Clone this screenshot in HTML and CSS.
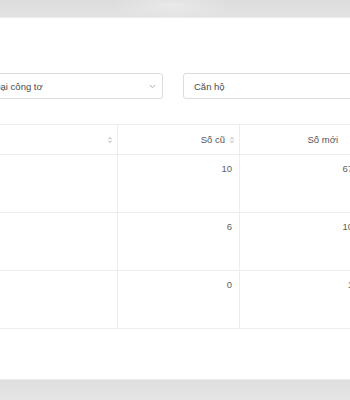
FILE: index.html
```html
<!DOCTYPE html>
<html lang="vi">
<head>
<meta charset="utf-8">
<link rel="stylesheet" href="styles.css">
</head>
<body>
<div class="band band-top"></div>
<div class="modal">
  <div class="filters">
    <div class="select">
      <span class="select-text">Loại công tơ</span>
      <svg class="chev" width="7" height="5" viewBox="0 0 7 5"><path d="M0.8 1 L3.5 3.7 L6.2 1" fill="none" stroke="#a6a6a6" stroke-width="0.9"/></svg>
    </div>
    <div class="select">
      <span class="select-text">Căn hộ</span>
    </div>
  </div>
  <div class="table">
    <div class="row head">
      <div class="cell c1"><span></span><svg class="sort" width="6" height="8" viewBox="0 0 6 8"><path d="M3 0.5 L5.5 3.3 L0.5 3.3 Z M3 7.5 L5.5 4.7 L0.5 4.7 Z" fill="#d4d4d8"/></svg></div>
      <div class="cell c2"><span>Số cũ</span><svg class="sort" width="6" height="8" viewBox="0 0 6 8"><path d="M3 0.5 L5.5 3.3 L0.5 3.3 Z M3 7.5 L5.5 4.7 L0.5 4.7 Z" fill="#d4d4d8"/></svg></div>
      <div class="cell c3"><span>Số mới</span><svg class="sort" width="6" height="8" viewBox="0 0 6 8"><path d="M3 0.5 L5.5 3.3 L0.5 3.3 Z M3 7.5 L5.5 4.7 L0.5 4.7 Z" fill="#d4d4d8"/></svg></div>
    </div>
    <div class="row">
      <div class="cell c1"></div>
      <div class="cell c2">10</div>
      <div class="cell c3">67</div>
    </div>
    <div class="row">
      <div class="cell c1"></div>
      <div class="cell c2">6</div>
      <div class="cell c3">10</div>
    </div>
    <div class="row">
      <div class="cell c1"></div>
      <div class="cell c2">0</div>
      <div class="cell c3">1</div>
    </div>
  </div>
</div>
<div class="band band-bottom"></div>
</body>
</html>
```

FILE: styles.css
```css
html, body {
  margin: 0;
  padding: 0;
  width: 350px;
  height: 400px;
  overflow: hidden;
  background: #ffffff;
  font-family: "Liberation Sans", Arial, sans-serif;
}

.band {
  width: 100%;
}

.band-top {
  height: 18px;
  background: radial-gradient(ellipse 60px 14px at 172px 6px, #e9e9e9, rgba(233,233,233,0)),
              linear-gradient(#dcdcdc, #e3e3e3);
  border-bottom: 1px solid #ececec;
  box-sizing: border-box;
}

.band-bottom {
  height: 21px;
  background: linear-gradient(#dedede, #e6e6e6);
  border-top: 1px solid #ececec;
  box-sizing: border-box;
}

.modal {
  height: 361px;
  box-sizing: border-box;
  padding-top: 55px;
  background: #ffffff;
  overflow: hidden;
}

.filters {
  display: flex;
  gap: 20px;
  margin-left: -21px;
}

.select {
  flex: 0 0 184px;
  height: 26px;
  box-sizing: border-box;
  border: 1px solid #dcdcdf;
  border-radius: 3px;
  display: flex;
  align-items: center;
  justify-content: space-between;
  padding: 0 6px 0 10px;
  font-size: 9.5px;
  color: #4a4a4a;
}

.chev {
  display: block;
}

.table {
  margin-top: 25px;
  margin-left: -19px;
  width: 400px;
  border-top: 1px solid #ededf1;
}

.row {
  display: flex;
  height: 58px;
  box-sizing: border-box;
  border-bottom: 1px solid #ededf1;
}

.row.head {
  height: 30px;
  align-items: stretch;
}

.cell {
  box-sizing: border-box;
  font-size: 9.5px;
  color: #5e5e5e;
  text-align: right;
  padding: 8px 7px 0 8px;
  line-height: 12px;
}

.c1 {
  width: 137px;
  border-right: 1px solid #ededf1;
}

.c2 {
  width: 122px;
  border-right: 1px solid #ededf1;
}

.c3 {
  width: 122px;
  padding-right: 9px;
}

.head .cell {
  display: flex;
  align-items: center;
  justify-content: flex-end;
  gap: 4px;
  padding: 0 4px 0 8px;
  color: #555555;
}

.head .c3 {
  gap: 14px;
  padding-right: 4px;
}

.sort {
  display: block;
}
```
